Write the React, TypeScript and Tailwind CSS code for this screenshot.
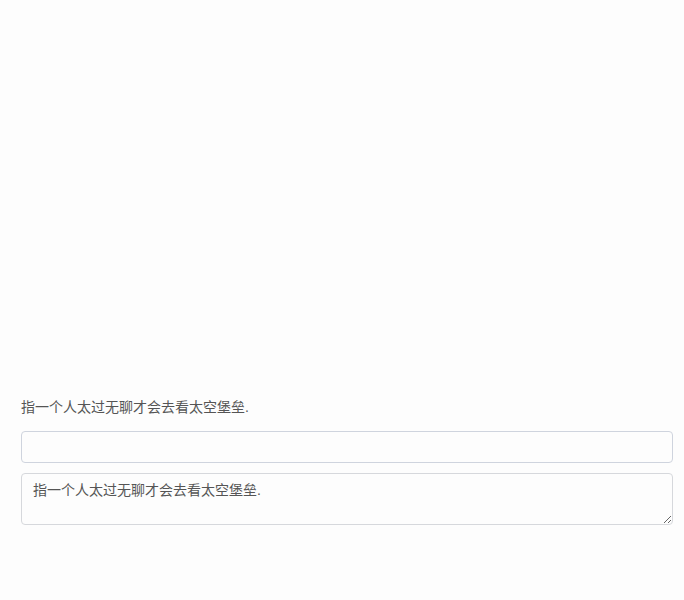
export default function App() {
  return (
    <div
      className="min-h-[600px] bg-[#fdfdfd] pt-[397px] pl-[21px] pr-[11px]"
      style={{ fontFamily: '"Liberation Sans", "Noto Sans CJK SC", sans-serif' }}
    >
      <p className="text-[14px] leading-[20px] text-[#555]">指一个人太过无聊才会去看太空堡垒.</p>
      <input
        type="text"
        className="mt-[14px] block h-[32px] w-full rounded-[4px] border border-[#cfd4de] bg-[#fdfdfd] px-3 text-[14px] text-[#555] outline-none"
      />
      <textarea
        defaultValue="指一个人太过无聊才会去看太空堡垒."
        className="mt-[10px] block h-[52px] w-full rounded-[4px] border border-[#d6d8dc] bg-[#fdfdfd] px-[11px] py-[6px] text-[14px] leading-[20px] text-[#555] outline-none"
      />
    </div>
  )
}
